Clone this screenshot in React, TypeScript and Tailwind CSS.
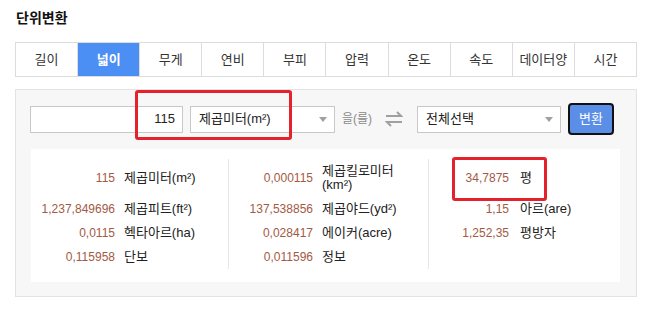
import React from 'react';

const tabs = ['길이', '넓이', '무게', '연비', '부피', '압력', '온도', '속도', '데이터양', '시간'];

// rows of results: [col1, col2, col3]
const rows: ([string, string] | null)[][] = [
  [['115', '제곱미터(m²)'], ['0,000115', '제곱킬로미터(km²)'], ['34,7875', '평']],
  [['1,237,849696', '제곱피트(ft²)'], ['137,538856', '제곱야드(yd²)'], ['1,15', '아르(are)']],
  [['0,0115', '헥타아르(ha)'], ['0,028417', '에이커(acre)'], ['1,252,35', '평방자']],
  [['0,115958', '단보'], ['0,011596', '정보'], null],
];

function Caret() {
  return (
    <svg width="8" height="5" viewBox="0 0 8 5" className="shrink-0">
      <path d="M0 0 L8 0 L4 5 Z" fill="#a0a0a0" />
    </svg>
  );
}

function SwapIcon() {
  return (
    <svg width="18" height="16" viewBox="0 0 18 16" className="shrink-0">
      <path d="M1 5 H16 L12 1" fill="none" stroke="#a0a0a0" strokeWidth="2" />
      <path d="M17 11 H2 L6 15" fill="none" stroke="#a0a0a0" strokeWidth="2" />
    </svg>
  );
}

function ResultCell({ data, col }: { data: [string, string] | null; col: number }) {
  const border = col > 0 ? 'border-l border-[#e6e6e6]' : '';
  const numW = col === 2 ? 'w-[80px]' : 'w-[84px]';
  const gap = col === 2 ? 'ml-[11px]' : 'ml-[9px]';
  return (
    <div className={`flex items-center py-[5px] ${border}`}>
      {data && (
        <>
          <span className={`${numW} shrink-0 text-right text-[#a35a45]`}>{data[0]}</span>
          <span className={`${gap} w-[80px] leading-[14px] text-[13px] text-[#222]`}>{data[1]}</span>
        </>
      )}
    </div>
  );
}

export default function App() {
  return (
    <div
      className="relative w-[652px] h-[310px] bg-white text-[12px] leading-[14px]"
      style={{ fontFamily: '"Liberation Sans", "Noto Sans CJK KR", sans-serif' }}
    >
      <h1 className="pl-4 pt-[8px] text-[14px] leading-[20px] font-bold text-[#111]">단위변환</h1>

      {/* Tabs */}
      <div className="mx-[15px] mt-[14px] flex h-[35px] border border-[#dcdcdc]">
        {tabs.map((t, i) => (
          <div
            key={t}
            className={`flex-1 flex items-center justify-center text-[13px] ${
              i > 0 ? 'border-l border-[#dcdcdc]' : ''
            } ${i === 1 ? 'bg-[#4b8ff4] text-white font-bold' : 'text-[#333]'}`}
          >
            {t}
          </div>
        ))}
      </div>

      {/* Converter panel */}
      <div className="mx-[15px] mt-3 border border-[#e3e3e3] bg-[#f7f7f7] px-[14px] pt-[13px] pb-[14px]">
        <div className="flex items-center h-[32px]">
          <div className="w-[153px] h-[27px] border border-[#c8c8c8] bg-white flex items-center justify-end pr-[7px] text-[13px] text-[#222]">
            115
          </div>
          <div className="ml-[7px] w-[145px] h-[27px] border border-[#c8c8c8] bg-white flex items-center justify-between pl-[8px] pr-[7px] text-[13px] text-[#222]">
            <span>제곱미터(m²)</span>
            <Caret />
          </div>
          <span className="ml-[7px] text-[#8a8a8a]">을(를)</span>
          <span className="ml-[13px]">
            <SwapIcon />
          </span>
          <div className="ml-[14px] w-[144px] h-[27px] border border-[#c8c8c8] bg-white flex items-center justify-between pl-[8px] pr-[7px] text-[13px] text-[#222]">
            <span>전체선택</span>
            <Caret />
          </div>
          <button className="ml-[7px] w-[46px] h-[32px] rounded-[4px] border-2 border-[#111] bg-[#5b8ee6] text-white text-[13px]">
            변환
          </button>
        </div>

        <div className="mt-[14px] ml-[1px] w-[589px] bg-white pt-[10px] pb-[13px]">
          <div className="grid grid-cols-[197px_200px_1fr]">
            {rows.map((r, ri) =>
              r.map((c, ci) => <ResultCell key={`${ri}-${ci}`} data={c} col={ci} />)
            )}
          </div>
        </div>
      </div>

      {/* Red highlight boxes */}
      <div className="absolute left-[135px] top-[90px] w-[157px] h-[50px] border-[3px] border-[#e3222b] rounded-[3px]" />
      <div className="absolute left-[452px] top-[157px] w-[95px] h-[44px] border-[3px] border-[#e3222b] rounded-[3px]" />
    </div>
  );
}
